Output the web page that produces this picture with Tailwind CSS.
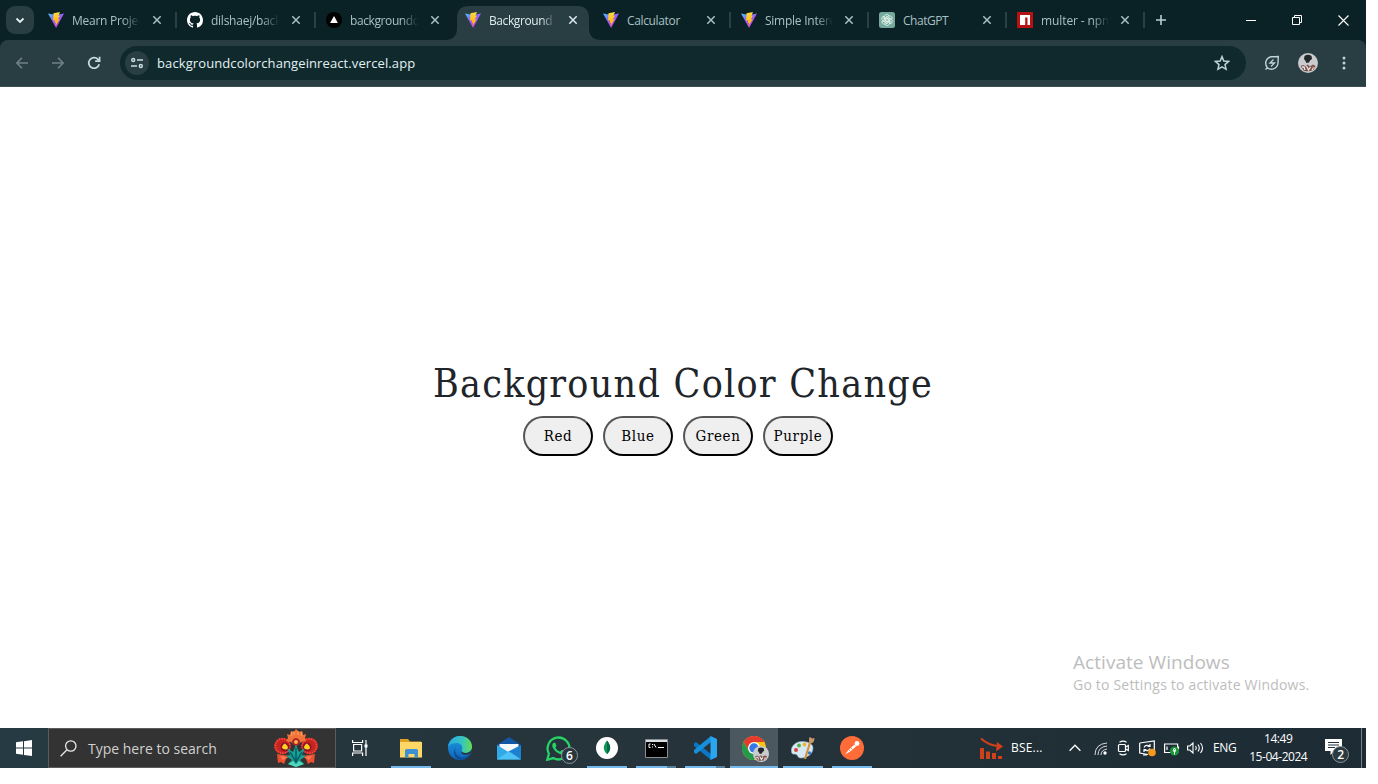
<!DOCTYPE html>
<html lang="en">
<head>
<meta charset="utf-8">
<title>Background Color Change</title>
<script src="https://cdn.jsdelivr.net/npm/@tailwindcss/browser@4"></script>
</head>
<body class="bg-white font-['Open_Sans','Noto_Sans',sans-serif] overflow-hidden">
<svg width="0" height="0" class="absolute">
  <defs>
    <linearGradient id="vg" x1="0" y1="0" x2=".6" y2="1"><stop offset="0" stop-color="#41c3ff"/><stop offset=".5" stop-color="#9b5cf5"/><stop offset="1" stop-color="#c13bf0"/></linearGradient>
    <linearGradient id="vb" x1="0" y1="0" x2="0" y2="1"><stop offset="0" stop-color="#ffdc3e"/><stop offset="1" stop-color="#ffa800"/></linearGradient>
    <linearGradient id="eg" x1="0" y1="0" x2="1" y2="0"><stop offset="0" stop-color="#2aa8e8"/><stop offset=".6" stop-color="#35c5c0"/><stop offset="1" stop-color="#67dd4c"/></linearGradient>
    <linearGradient id="eb" x1="0" y1="0" x2="0" y2="1"><stop offset="0" stop-color="#1b9de2"/><stop offset="1" stop-color="#1062b8"/></linearGradient>
    <symbol id="vite" viewBox="0 0 16 16"><path d="M0 1.600 8.100 16 16 1.600 8.200 3z" fill="url(#vg)"/><path d="M12 0 5.500 1.200 5.100 8.700l2.100-.4-.5 2.800 1.400-.3-.8 3.700 4.400-7.400-2 .3 2.200-3.600-1.500.3z" fill="url(#vb)"/></symbol>
    <symbol id="x" viewBox="0 0 10 10"><path d="M1.300 1.300 8.700 8.700M8.700 1.300 1.300 8.700" stroke="currentColor" stroke-width="1.500" fill="none"/></symbol>
    <symbol id="face" viewBox="0 0 20 20"><circle cx="10" cy="10" r="10" fill="#c9cbcd"/><path d="M6.500 3q3.500-2.500 7 0l.5 3-2 1.500-1 2-2.500.5-1-2-1.500-2z" fill="#24272a"/><path d="M2.500 13l3-1 2 1.500 2-2 2.500 2 3-2 2.500 1.500-2 4q-4 2-9.500 1z" fill="#77504f"/><path d="M4 14l2 0 1 3M8.500 13l2 4 2-3M14 17l2-3" stroke="#f0e9e4" stroke-width="1.300" fill="none"/><path d="M14 13l2 1-1 2z" fill="#d06a3c"/></symbol>
  </defs>
</svg>
<div class="flex h-[768px] w-[1366px] flex-col">

  <!-- Tab strip -->
  <div class="flex h-10 shrink-0 bg-[#0a2226] text-[12px] text-[#a9c0c4]">
    <div class="flex w-10 items-center pl-1.5"><div class="flex size-7 items-center justify-center rounded-[9px] bg-[#283e42]"><svg width="10" height="7" fill="none" stroke="#e2f1f3" stroke-width="1.800"><path d="M1.500 1.500 5 5l3.500-3.500"/></svg></div></div>

    <div class="flex w-[139px] items-center pl-2"><svg class="size-4 shrink-0"><use href="#vite"/></svg><span class="ml-2 w-[68px] shrink-0 overflow-hidden whitespace-nowrap pt-0.5 tracking-[-0.25px] [mask-image:linear-gradient(90deg,#000_75%,transparent)]">Mearn Project</span><svg class="ml-3 size-[10px] shrink-0"><use href="#x"/></svg><i class="ml-[13px] h-4 w-0.5 shrink-0 bg-[#2a4044]"></i></div>

    <div class="flex w-[139px] items-center pl-2"><svg class="size-4 shrink-0" viewBox="0 0 16 16" fill="#fff"><path d="M8 0C3.580 0 0 3.580 0 8c0 3.540 2.290 6.530 5.470 7.590.4.070.55-.17.55-.38 0-.19-.01-.82-.01-1.490-2.010.37-2.530-.49-2.690-.94-.09-.23-.48-.94-.82-1.130-.28-.15-.68-.52-.01-.53.63-.01 1.080.58 1.230.82.72 1.210 1.870.87 2.330.66.070-.52.28-.87.51-1.070-1.780-.2-3.640-.89-3.640-3.950 0-.87.31-1.590.82-2.150-.08-.2-.36-1.020.08-2.120 0 0 .67-.21 2.200.82.64-.18 1.320-.27 2-.27s1.360.09 2 .27c1.530-1.040 2.200-.82 2.200-.82.44 1.100.16 1.920.08 2.120.51.56.82 1.270.82 2.150 0 3.070-1.870 3.750-3.650 3.950.29.25.54.73.54 1.480 0 1.070-.01 1.930-.01 2.200 0 .21.15.46.55.38A8.010 8.010 0 0 0 16 8c0-4.420-3.580-8-8-8z"/></svg><span class="ml-2 w-[68px] shrink-0 overflow-hidden whitespace-nowrap pt-0.5 tracking-[-0.25px] [mask-image:linear-gradient(90deg,#000_75%,transparent)]">dilshaej/backg</span><svg class="ml-3 size-[10px] shrink-0"><use href="#x"/></svg><i class="ml-[13px] h-4 w-0.5 shrink-0 bg-[#2a4044]"></i></div>

    <div class="flex w-[139px] items-center pl-2"><svg class="size-4 shrink-0" viewBox="0 0 16 16"><circle cx="8" cy="8" r="8" fill="#000"/><path d="M8 4 11.900 11H4.100z" fill="#fff"/></svg><span class="ml-2 w-[68px] shrink-0 overflow-hidden whitespace-nowrap pt-0.5 tracking-[-0.4px] [mask-image:linear-gradient(90deg,#000_75%,transparent)]">backgroundcolor</span><svg class="ml-3 size-[10px] shrink-0"><use href="#x"/></svg></div>

    <div class="relative flex w-[138px] items-center pl-2 text-[#dcebed]">
      <svg class="absolute -left-3 top-1.5" width="156" height="34" fill="#283e42"><path d="M0 34Q12 34 12 22V12Q12 0 24 0H132Q144 0 144 12V22Q144 34 156 34z"/></svg>
      <svg class="relative size-4 shrink-0"><use href="#vite"/></svg><span class="relative ml-2 w-[66px] shrink-0 overflow-hidden whitespace-nowrap pt-0.5 tracking-[-0.4px] [mask-image:linear-gradient(90deg,#000_80%,transparent)]">Background</span><svg class="relative ml-[13px] size-[10px] shrink-0"><use href="#x"/></svg></div>

    <div class="relative flex w-[138px] items-center pl-2"><svg class="size-4 shrink-0"><use href="#vite"/></svg><span class="ml-2 w-[68px] shrink-0 whitespace-nowrap pt-0.5 tracking-[-0.35px]">Calculator</span><svg class="ml-[11px] size-[10px] shrink-0"><use href="#x"/></svg><i class="ml-[13px] h-4 w-0.5 shrink-0 bg-[#2a4044]"></i></div>

    <div class="flex w-[138px] items-center pl-2"><svg class="size-4 shrink-0"><use href="#vite"/></svg><span class="ml-2 w-[68px] shrink-0 overflow-hidden whitespace-nowrap pt-0.5 tracking-[-0.25px] [mask-image:linear-gradient(90deg,#000_75%,transparent)]">Simple Interest</span><svg class="ml-[11px] size-[10px] shrink-0"><use href="#x"/></svg><i class="ml-[13px] h-4 w-0.5 shrink-0 bg-[#2a4044]"></i></div>

    <div class="flex w-[138px] items-center pl-2"><svg class="size-4 shrink-0" viewBox="0 0 16 16" fill="none" stroke="#e4f5ef"><rect width="16" height="16" rx="2.500" fill="#75a99b" stroke="none"/><g stroke-width=".8"><path id="kn" d="M8 9.500 5.400 8V4.800a2.400 2.400 0 0 1 4.400-1.300L6.900 5.200V7.500"/><use href="#kn" transform="rotate(60 8 8)"/><use href="#kn" transform="rotate(120 8 8)"/><use href="#kn" transform="rotate(180 8 8)"/><use href="#kn" transform="rotate(240 8 8)"/><use href="#kn" transform="rotate(300 8 8)"/></g></svg><span class="ml-2 w-[68px] shrink-0 whitespace-nowrap pt-0.5 tracking-[-0.45px]">ChatGPT</span><svg class="ml-[11px] size-[10px] shrink-0"><use href="#x"/></svg><i class="ml-[13px] h-4 w-0.5 shrink-0 bg-[#2a4044]"></i></div>

    <div class="flex w-[138px] items-center pl-2"><svg class="size-4 shrink-0" viewBox="0 0 16 16"><path d="M0 0h16v16H0z" fill="#b81114"/><path d="M3 3h10v10h-2.500V5.500H8.200V13H3z" fill="#fff"/></svg><span class="ml-2 w-[68px] shrink-0 overflow-hidden whitespace-nowrap pt-0.5 tracking-[-0.1px] [mask-image:linear-gradient(90deg,#000_75%,transparent)]">multer - npm</span><svg class="ml-[11px] size-[10px] shrink-0"><use href="#x"/></svg><i class="ml-[13px] h-4 w-0.5 shrink-0 bg-[#2a4044]"></i></div>

    <div class="flex flex-1 items-center pl-[9px]"><svg width="10" height="10" stroke="#b9cfd3" stroke-width="1.600"><path d="M5 0v10M0 5h10"/></svg></div>
    <div class="flex w-[138px] items-center text-white">
      <div class="flex w-[46px] justify-center"><i class="h-px w-[10px] bg-white"></i></div>
      <div class="flex w-[46px] justify-center"><svg width="10" height="10" fill="none" stroke="#fff"><path d="M.5 2.500h7v7h-7zM2.500 2.500v-2h7v7h-2"/></svg></div>
      <div class="flex w-[46px] justify-center"><svg width="11" height="11" stroke="#fff" stroke-width="1.100"><path d="M.5.5l10 10M10.500.5l-10 10"/></svg></div>
    </div>
  </div>

  <!-- Address bar -->
  <div class="h-[47px] shrink-0 bg-[#0a2226]">
    <div class="flex h-full items-center rounded-t-[8px] border-b border-[#3b4e52] bg-[#283e42]">
      <div class="flex w-[120px] items-center pl-4"><svg width="12" height="12" fill="none" stroke="#6f8387" stroke-width="1.600"><path d="M12 6H1M6 .8.9 6 6 11.200"/></svg><svg class="ml-6" width="12" height="12" fill="none" stroke="#6f8387" stroke-width="1.600"><path d="M0 6h11M6 .8 11.100 6 6 11.200"/></svg><svg class="ml-[23px]" width="14" height="14" fill="none" stroke="#c5dde1" stroke-width="1.700"><path d="M12.200 8.200A5.300 5.300 0 1 1 11 3.400L12.600 5"/><path d="M12.600.8V5.200H8.200"/></svg></div>
      <div class="flex h-[34px] w-[1126px] items-center rounded-full bg-[#10292d] pl-[5px]">
        <div class="flex size-6 items-center justify-center rounded-full bg-[#283e42]"><svg width="12" height="12" fill="none" stroke="#c9e0e4" stroke-width="1.400"><circle cx="2.200" cy="3" r="1.500"/><path d="M6 3h6M0 9h6"/><circle cx="9.800" cy="9" r="1.500"/></svg></div>
        <span class="ml-2 flex-1 pt-0.5 text-[13px] tracking-[0.1px] text-[#e3f1f3]">backgroundcolorchangeinreact.vercel.app</span>
        <svg class="mr-4" width="16" height="16" fill="none" stroke="#bcd3d7" stroke-width="1.500"><path d="M8 1.600 9.800 6l4.800.4-3.600 3.200 1.100 4.700L8 11.800l-4.100 2.500L5 9.600 1.400 6.400 6.200 6z"/></svg>
      </div>
      <div class="flex flex-1 items-center pl-[18px]"><svg width="16" height="16" fill="none" stroke="#bcd3d7" stroke-width="1.400"><path d="M1.500 14.500 3.300 12.700M3.300 12.700C-.2 8 2.500 2 8 1.700Q11.500 1.700 14.300 1.500 14.200 4 14 8C13.500 13.500 7.500 16 3.300 12.700z"/><path d="M9.500 4.500 6 8h4.500L7 11.500" stroke-width="1.300"/></svg><svg class="ml-[18px] size-5"><use href="#face"/></svg><svg class="ml-6" width="4" height="14" fill="#bcd3d7"><circle cx="2" cy="2" r="1.500"/><circle cx="2" cy="7" r="1.500"/><circle cx="2" cy="12" r="1.500"/></svg></div>
    </div>
  </div>

  <!-- Page -->
  <main class="relative flex h-[641px] shrink-0 flex-col items-center bg-white pt-[270px] font-['DejaVu_Serif_Condensed','DejaVu_Serif',serif]">
    <h1 class="h-[59px] whitespace-nowrap text-[39px] leading-[54px] tracking-[1.25px] text-[#212529]">Background Color Change</h1>
    <div class="mr-[10px] flex gap-[10px] text-[15px] tracking-[0.6px] text-black">
      <button class="h-10 w-[70px] whitespace-nowrap rounded-[20px] border-2 border-b-black border-l-[#555] border-r-black border-t-[#555] bg-[#efefef]">Red</button>
      <button class="h-10 w-[70px] whitespace-nowrap rounded-[20px] border-2 border-b-black border-l-[#555] border-r-black border-t-[#555] bg-[#efefef]">Blue</button>
      <button class="h-10 w-[70px] whitespace-nowrap rounded-[20px] border-2 border-b-black border-l-[#555] border-r-black border-t-[#555] bg-[#efefef]">Green</button>
      <button class="h-10 w-[70px] whitespace-nowrap rounded-[20px] border-2 border-b-black border-l-[#555] border-r-black border-t-[#555] bg-[#efefef]">Purple</button>
    </div>
    <div class="absolute left-[1073px] top-[562px] whitespace-nowrap font-['Open_Sans',sans-serif] text-[#bdbdbd]">
      <p class="text-[19px] leading-[26px] tracking-[0.05px]">Activate Windows</p>
      <p class="text-[14px] leading-[20px] tracking-[0.2px]">Go to Settings to activate Windows.</p>
    </div>
  </main>

  <!-- Taskbar -->
  <footer class="flex h-10 shrink-0 items-stretch bg-linear-to-r from-[#253a42] via-[#26333a] to-[#1c2b34] text-white">
    <div class="flex w-12 items-center justify-center"><svg width="16" height="16" fill="#fff"><path d="M0 2.300 7 1.300V7.600H0zM8 1.200 16 0v7.600H8zM0 8.500h7v6.300L0 13.800zM8 8.500h8V16L8 14.900z"/></svg></div>
    <div class="flex w-[288px] items-center border border-[#5b5b5b] bg-[#333] pl-[11px]">
      <svg width="17" height="17" fill="none" stroke="#e8e8e8" stroke-width="1.300"><circle cx="10.800" cy="6" r="5.200"/><path d="M7 9.800.6 16.200"/></svg>
      <span class="ml-[11px] flex-1 whitespace-nowrap text-[14px] text-[#d0d0d0]">Type here to search</span>
      <svg class="mr-[17px]" width="44" height="38" viewBox="0 0 44 38"><g fill="#c8231f"><circle cx="8.500" cy="17" r="8.300"/><circle cx="35.500" cy="17" r="8.300"/></g><g fill="none" stroke="#ee4b3d" stroke-dasharray="1.500 1"><circle cx="8.500" cy="17" r="7.200" stroke-width="2"/><circle cx="35.500" cy="17" r="7.200" stroke-width="2"/></g><g fill="#8c1629"><circle cx="11" cy="18" r="4.500"/><circle cx="33" cy="18" r="4.500"/></g><path d="M8 19q0-3 3-4.500 3 2 3 5-3 2-6-.5zM30 19q0-3 3-4.500 3 2 3 5-3 2-6-.5z" fill="#ffd21f"/><path d="M14 9l-1-4 3 1 1-4 3 1 2-3 3 3 3-1 1 4 3-1-1 4 1 3-5 1-5 4-5-4-5-1z" fill="#f0743a"/><path d="M17 7l1-4M20 6V2M24 6V2M27 7l1-4" stroke="#ffa263"/><path d="M18 12q4-6 8 0l-1 4h-6z" fill="#a81d27"/><circle cx="22" cy="13" r="2" fill="#ffb347"/><path d="M3 25l13 2-4 3-2 5-3-2-3 1zM41 25l-13 2 4 3 2 5 3-2 3 1z" fill="#ef4f31"/><path d="M6 27l7 1-4 3zM38 27l-7 1 4 3z" fill="#ff8058"/><path d="M22 16l3 7 6-4-3 7 4 1-6 4 4 4-8 3-8-3 4-4-6-4 4-1-3-7 6 4z" fill="#16a394"/><path d="M22 19v18M16 23l6 10 6-10" stroke="#0b5c67" stroke-width="1.500" fill="none"/><path d="M14 35l5-3 3 3 3-3 5 3-8 3z" fill="#4ed9bd"/></svg>
    </div>
    <div class="mr-[3px] flex w-12 items-center justify-center"><svg width="17" height="16" fill="none" stroke="#fff" stroke-width="1.200"><path d="M.6 0v2.500h10V0M.6 16v-3h10v3M1.600 4.500h8v6.500h-8zM14 0v16"/><path d="M12.500 4.500h3v3h-3z" fill="#fff" stroke="none"/></svg></div>

    <div class="flex flex-1 gap-px">
      <div class="flex w-12 flex-col items-center"><div class="flex h-[38px] items-center pt-0.5"><svg width="22" height="19"><path d="M0 0h8l2 2.500h11V6H0z" fill="#dba225"/><path d="M0 3h22v15.500H0z" fill="#ffd767"/><path d="M5 18.500v-7q0-1.500 1.500-1.500h10q1.500 0 1.500 1.500v7h-3.500V15h-6v3.500z" fill="#3f8fd4"/></svg></div><i class="h-0.5 w-10 bg-[#76b9ed]"></i></div>
      <div class="flex h-10 w-12 items-center justify-center"><svg width="24" height="24"><circle cx="12" cy="12" r="12" fill="url(#eb)"/><path d="M0 11C1 4 6 0 12 0c7 0 12 5 12 10.500 0 4-3 6.500-6.500 6.500-3 0-4.500-1-4-2.500 2.500-3.500-1-8-5-7.500C4 7.200 1 9 0 11z" fill="url(#eg)"/><path d="M8.500 10C5 14 8 21 14.500 21.500q4 .2 7.500-3.500-3 6-10 6C6 23 4 15 8.500 10z" fill="#0d4f99"/><path d="M13.500 14.500q-1 4.500 5 4.300 2.500-.2 4.600-2Q24 15 23.700 13q-1.700 4-6.200 4-3.500 0-4-2.500z" fill="#26343b"/></svg></div>
      <div class="flex h-10 w-12 items-center justify-center"><svg width="24" height="23"><path d="M0 8 12 0l12 8v5H0z" fill="#1257a4"/><path d="M2.500 7h19v8h-19z" fill="#f3f8fb"/><path d="M0 8l13 8L24 22.500H0z" fill="#31a9e8"/><path d="M24 8 10.500 15 24 22.500z" fill="#1c82d0"/><path d="M0 22.500 10.500 15l3 .3L24 22.500z" fill="#4cc2f5"/></svg></div>
      <div class="relative flex h-10 w-12 items-center justify-center"><svg width="25" height="25" viewBox="0 0 24 24" fill="#25d366"><path d="M17.472 14.382c-.297-.149-1.758-.867-2.030-.967-.273-.099-.471-.148-.67.150-.197.297-.767.966-.940 1.164-.173.199-.347.223-.644.075-.297-.150-1.255-.463-2.390-1.475-.883-.788-1.480-1.761-1.653-2.059-.173-.297-.018-.458.130-.606.134-.133.298-.347.446-.520.149-.174.198-.298.298-.497.099-.198.050-.371-.025-.520-.075-.149-.669-1.612-.916-2.207-.242-.579-.487-.500-.669-.510-.173-.008-.371-.010-.570-.010-.198 0-.520.074-.792.372-.272.297-1.040 1.016-1.040 2.479 0 1.462 1.065 2.875 1.213 3.074.149.198 2.096 3.200 5.077 4.487.709.306 1.262.489 1.694.625.712.227 1.360.195 1.871.118.571-.085 1.758-.719 2.006-1.413.248-.694.248-1.289.173-1.413z"/><path d="M1.200 22.800 2.800 17A10.500 10.500 0 1 1 7 21.200z" fill="none" stroke="#25d366" stroke-width="2.200"/></svg><span class="absolute left-[27px] top-[19px] flex size-[17px] items-center justify-center rounded-full border border-[#89949a] bg-[#29363d] text-[12px] font-semibold">6</span></div>
      <div class="flex w-12 flex-col items-center"><div class="flex h-[38px] items-center pt-0.5"><svg width="22" height="22"><circle cx="11" cy="11" r="11" fill="#fff"/><path d="M11 3.500C6.500 9 7 13.500 11 17c4-3.500 4.500-8 0-13.500z" fill="#12975b"/><path d="M11 3.500C15.500 9 15 13.500 11 17v2z" fill="#08694c"/></svg></div><i class="h-0.5 w-10 bg-[#76b9ed]"></i></div>
      <div class="flex w-12 flex-col items-center"><div class="relative flex h-[38px] items-center pt-0.5"><svg width="23" height="19"><path d="M.5.5h22v18H.5z" fill="#000" stroke="#8b8f91"/><path d="M1 1h21v2H1z" fill="#d7dde0"/><path d="M5.500 5H4v3.500h1.500M7.500 5v1M7.500 7.500v1M9 5l2 3.500M13 8.500h6" stroke="#fff" fill="none"/></svg></div><div class="flex"><i class="h-0.5 w-[31px] bg-[#76b9ed]"></i><i class="h-0.5 w-[9px] bg-[#55819f]"></i></div></div>
      <div class="flex w-12 flex-col items-center"><div class="flex h-[38px] items-center pt-0.5"><svg width="25" height="24"><path d="M1 7.500 3 6l15 12v6L1 10z" fill="#0b76c4"/><path d="M1 16.500 3 18 18 6V0L1 14z" fill="#178fdd"/><path d="M17.500 0 24 3v18l-6.500 3z" fill="#2aa5f2"/></svg></div><div class="flex"><i class="h-0.5 w-[31px] bg-[#76b9ed]"></i><i class="h-0.5 w-[9px] bg-[#55819f]"></i></div></div>
      <div class="relative flex w-12 flex-col items-center bg-[#4c5860]"><div class="flex h-[38px] items-center pt-0.5"><svg width="24" height="24"><circle cx="12" cy="12" r="12" fill="#fbc116"/><path d="M1.600 6A12 12 0 0 1 22.400 6H12L7 15z" fill="#e33b2e"/><path d="M1.600 6A12 12 0 0 0 12 24L17.200 15 12 12 6.800 15z" fill="#229a4b"/><circle cx="12" cy="12" r="6" fill="#fff"/><circle cx="12" cy="12" r="4.700" fill="#3478e5"/></svg></div><svg class="absolute left-[23px] top-[18px] size-4"><use href="#face"/></svg><i class="h-0.5 w-12 bg-[#76b9ed]"></i></div>
      <div class="flex w-12 flex-col items-center"><div class="flex h-[38px] items-center pt-0.5"><svg width="24" height="24"><path d="M12 5.500C5 5 0 10 .3 15c.2 4 3 3 5 3.500 2 1 1 3 4 3.500C16 22.500 22 18 22 12c0-4-5-6.300-10-6.500z" fill="#d5e9f5" stroke="#87afc9" stroke-width=".6"/><circle cx="5" cy="14" r="2" fill="#d9413a"/><circle cx="8" cy="9.500" r="1.900" fill="#54ae45"/><circle cx="13.500" cy="8.500" r="1.900" fill="#eab72c"/><circle cx="18.500" cy="17" r="1.700" fill="#3979cc"/><path d="M19.500 5 14 23" stroke="#d8913f" stroke-width="2.200"/><path d="M18 5q0-4 1-4l2 1.500L23.500 2q0 4-3 5.500z" fill="#c89a68"/></svg></div><i class="h-0.5 w-10 bg-[#76b9ed]"></i></div>
      <div class="flex w-12 flex-col items-center"><div class="flex h-[38px] items-center pt-0.5"><svg width="24" height="24"><circle cx="12" cy="12" r="12" fill="#ff6c37"/><path d="M5 18.500 8.500 14l6-5.500 1.800 1.800-6 5.200z" fill="#fff"/><circle cx="17" cy="7.500" r="2.400" fill="#fff"/><path d="M9 14l1.500 1.500M11 12l1.500 1.500" stroke="#ff6c37" stroke-width=".8"/></svg></div><i class="h-0.5 w-10 bg-[#76b9ed]"></i></div>
    </div>

    <div class="flex w-[387px] items-center">
      <svg class="ml-px" width="23" height="23" fill="#cf401b"><path d="M1 1.500Q8 8 18 9" fill="none" stroke="#cf401b" stroke-width="2.200"/><path d="M17 5 23 9.500 16 14.500z"/><path d="M0 11h4v11H0zM6 14.500h4V22H6zM12 16h4v6h-4zM18 19h4v3h-4z"/></svg>
      <span class="ml-2 w-[55px] whitespace-nowrap text-[12px] tracking-[0.2px]">BSE...</span>
      <svg class="ml-[3px]" width="12" height="8" fill="none" stroke="#fff" stroke-width="1.300"><path d="M.6 6.800 6 1.300l5.400 5.500"/></svg>
      <svg class="ml-[13px]" width="13" height="13" fill="none" stroke="#fff"><g stroke="#d5dadd"><path d="M1 13Q1 2 13 1M4 13Q4 5 13 4M7 13Q7 8 13 7"/></g><circle cx="11" cy="11" r="1.700" fill="#fff" stroke="none"/></svg>
      <svg class="ml-[10px]" width="13" height="16" fill="none" stroke="#fff" stroke-width="1.200"><rect x="1.500" y="4.500" width="7" height="7" rx="1"/><path d="M8.500 7 11.300 5.500v5L8.500 9M2.500 2.300Q6 0 9.500 2.300M2.500 13.700Q6 16 9.500 13.700"/></svg>
      <svg class="ml-[9px]" width="17" height="17" fill="none" stroke="#fff" stroke-width="1.200"><path d="M.7 3 15.300 1v12.500M.7 3v10L9 14.500M4 15h4"/><path d="M5 7.500Q7 4 10.500 6M11 4v2.500H8.500M11 8.500Q9 12 5.500 10M5 12V9.500h2.500"/><circle cx="13" cy="12.500" r="3.800" fill="#f79a1c" stroke="none"/></svg>
      <svg class="ml-[8px] mt-0.5" width="16" height="14" fill="none" stroke="#fff" stroke-width="1.200"><path d="M.6 2h13v8.500H.6zM3 4.500v3.500M14.500 4.500v3"/><circle cx="10.500" cy="9" r="4.600" fill="#159735" stroke="none"/><path d="M10.500 12.500V8M10.500 6q-2.500 2 0 4.500 2.500-2.500 0-4.500z" stroke-width="1"/></svg>
      <svg class="ml-[7px]" width="17" height="14" fill="none" stroke="#fff" stroke-width="1.100"><path d="M.6 5h2.200L6 2v10L2.800 9H.6zM8.500 5Q10 7 8.500 9M11 3.500Q13.500 7 11 10.500M13.500 2Q17.500 7 13.500 12"/></svg>
      <span class="ml-[9px] text-[12px] tracking-[-0.4px]">ENG</span>
      <div class="ml-[11px] w-[62px] whitespace-nowrap text-center text-[12px] leading-[18px] tracking-[-0.45px]"><p>14:49</p><p>15-04-2024</p></div>
      <div class="relative ml-4 mt-1 size-6"><svg width="18" height="18"><path d="M0 1h17v12H9.500l-4 4v-4H0z" fill="#fff"/><path d="M3 4.500h11M3 7h11M3 9.500h7" stroke="#22313a"/></svg><span class="absolute left-[7px] top-[8px] flex size-[17px] items-center justify-center rounded-full border border-[#89949a] bg-[#2c393f] text-[12px] font-semibold">2</span></div>
      <i class="ml-auto mr-1 h-10 w-px bg-[#77828a]"></i>
    </div>
  </footer>
</div>
</body>
</html>
